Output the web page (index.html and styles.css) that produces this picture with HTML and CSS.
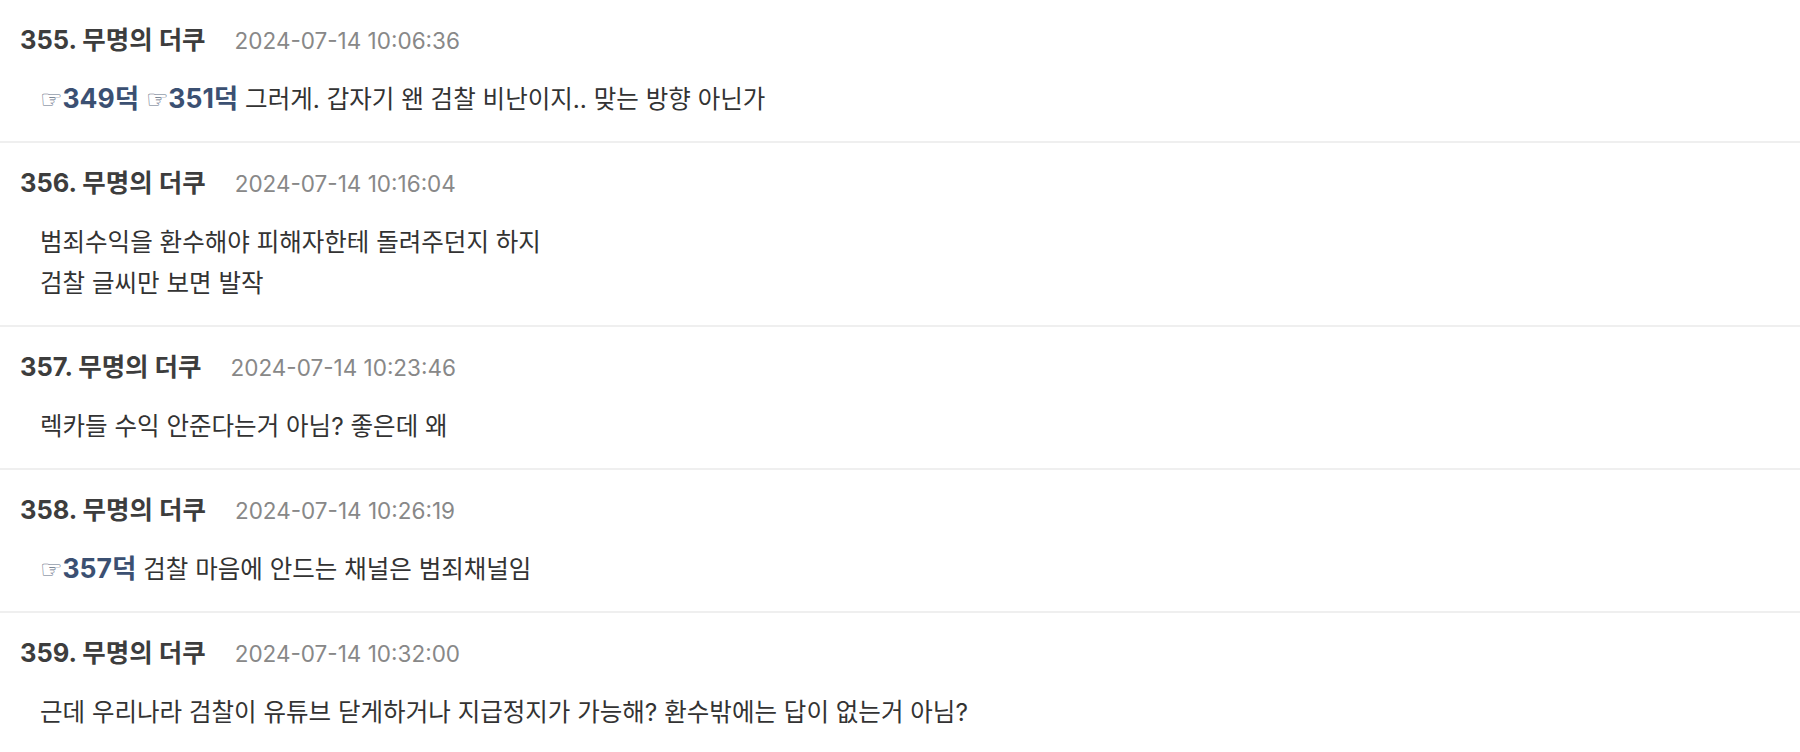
FILE: index.html
```html
<!DOCTYPE html>
<html lang="ko">
<head>
<meta charset="utf-8">
<title>댓글</title>
<link rel="stylesheet" href="styles.css">
</head>
<body>
<div class="comments">
  <div class="comment">
    <div class="head"><span class="name">355. 무명의 더쿠</span><span class="date">2024-07-14 10:06:36</span></div>
    <div class="body"><a class="ref" href="#"><span class="hand">☞</span>349덕</a> <a class="ref" href="#"><span class="hand">☞</span>351덕</a> 그러게. 갑자기 왠 검찰 비난이지.. 맞는 방향 아닌가</div>
  </div>
  <div class="comment">
    <div class="head"><span class="name">356. 무명의 더쿠</span><span class="date">2024-07-14 10:16:04</span></div>
    <div class="body">범죄수익을 환수해야 피해자한테 돌려주던지 하지<br>검찰 글씨만 보면 발작</div>
  </div>
  <div class="comment">
    <div class="head"><span class="name">357. 무명의 더쿠</span><span class="date">2024-07-14 10:23:46</span></div>
    <div class="body">렉카들 수익 안준다는거 아님? 좋은데 왜</div>
  </div>
  <div class="comment">
    <div class="head"><span class="name">358. 무명의 더쿠</span><span class="date">2024-07-14 10:26:19</span></div>
    <div class="body"><a class="ref" href="#"><span class="hand">☞</span>357덕</a> 검찰 마음에 안드는 채널은 범죄채널임</div>
  </div>
  <div class="comment">
    <div class="head"><span class="name">359. 무명의 더쿠</span><span class="date">2024-07-14 10:32:00</span></div>
    <div class="body">근데 우리나라 검찰이 유튜브 닫게하거나 지급정지가 가능해? 환수밖에는 답이 없는거 아님?</div>
  </div>
</div>
</body>
</html>
```

FILE: styles.css
```css
html, body {
  margin: 0;
  padding: 0;
  background: #ffffff;
}

body {
  font-family: "Inter", "Noto Sans CJK KR", sans-serif;
}

.comment {
  padding: 20px 0 21px;
  border-bottom: 2px solid #efefef;
}

.head {
  display: flex;
  align-items: baseline;
  height: 40px;
  line-height: 40px;
  padding-left: 20px;
}

.name {
  font-size: 25.5px;
  font-weight: 700;
  color: #3d3d3d;
}

.date {
  font-size: 22.5px;
  color: #888888;
  margin-left: 29px;
}

.body {
  margin-top: 19px;
  padding-left: 40px;
  font-size: 24.5px;
  line-height: 41px;
  color: #333333;
}

.ref {
  font-size: 26.5px;
  line-height: 1;
  color: #3b5072;
  font-weight: 700;
  text-decoration: none;
}

.hand {
  font-family: "DejaVu Sans", sans-serif;
  font-size: 25px;
  line-height: 1;
  font-weight: 400;
  color: #5f6e84;
}
```
